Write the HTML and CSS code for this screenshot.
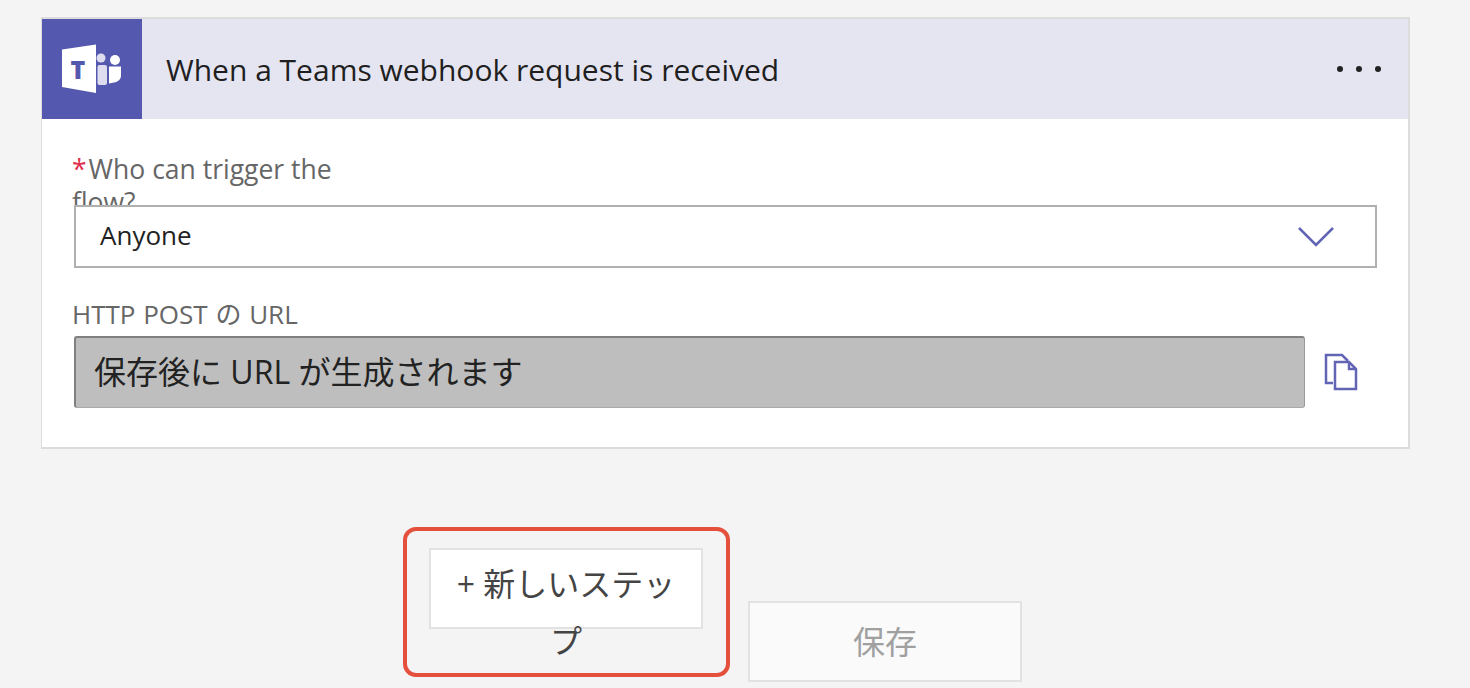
FILE: index.html
```html
<!DOCTYPE html>
<html lang="ja">
<head>
  <meta charset="UTF-8">
  <meta name="viewport" content="width=device-width, initial-scale=1.0">
  <title>When a Teams webhook request is received</title>
  <link rel="stylesheet" href="styles.css">
</head>
<body>
  <div class="card">
    <div class="card-header">
      <div class="logo-box">
        <svg width="100" height="100" viewBox="0 0 100 100">
          <circle cx="59" cy="39" r="4.500" fill="#fff" opacity="0.8"/>
          <rect x="55.500" y="46" width="9.500" height="20" rx="2" fill="#fff" opacity="0.8"/>
          <circle cx="73" cy="41" r="5" fill="#fff"/>
          <path d="M67 47.500h12v9c0 4-3 6.500-7 7l-5 1z" fill="#fff"/>
          <path d="M20 30.500L54 25.500V74L20 68z" fill="#fff"/>
          <text x="36" y="60" class="logo-letter">T</text>
        </svg>
      </div>
      <div class="card-title">When a Teams webhook request is received</div>
      <svg class="more" width="50" height="8" viewBox="0 0 50 8">
        <circle cx="4" cy="4" r="3" fill="#222"/>
        <circle cx="23" cy="4" r="3" fill="#222"/>
        <circle cx="42" cy="4" r="3" fill="#222"/>
      </svg>
    </div>
    <div class="card-body">
      <div class="field-label clipped"><span class="req">*</span>Who can trigger the flow?</div>
      <div class="select-box">
        <span>Anyone</span>
        <svg width="38" height="22" viewBox="0 0 38 22">
          <path d="M2 2L19 19L36 2" fill="none" stroke="#6264b4" stroke-width="2.500"/>
        </svg>
      </div>
      <div class="field-label url-label">HTTP POST の URL</div>
      <div class="url-row">
        <div class="url-field">保存後に URL が生成されます</div>
        <svg class="copy" width="34" height="38" viewBox="0 0 34 38">
          <path d="M9 30H2V2H18L24 8" fill="none" stroke="#6264b4" stroke-width="2.500"/>
          <path d="M11 9H25L32 16V36H11z" fill="#fff" stroke="#6264b4" stroke-width="2.500"/>
          <path d="M25 9V16H32" fill="none" stroke="#6264b4" stroke-width="2.500"/>
        </svg>
      </div>
    </div>
  </div>

  <div class="actions">
    <div class="highlight">
      <button class="btn new-step">+ 新しいステップ</button>
    </div>
    <button class="btn save" disabled>保存</button>
  </div>
</body>
</html>
```

FILE: styles.css
```css
* {
  box-sizing: border-box;
}

body {
  margin: 0;
  padding: 17px 60px 0 41px;
  height: 688px;
  overflow: hidden;
  background-color: #f4f4f4;
  font-family: "Open Sans", "Noto Sans CJK JP", sans-serif;
  color: #222;
}

.card {
  width: 1369px;
  height: 432px;
  background-color: #fff;
  border: 2px solid #dcdcdc;
  border-left-width: 1px;
}

.card-header {
  display: flex;
  align-items: center;
  height: 100px;
  background-color: #e5e5f1;
}

.logo-box {
  width: 100px;
  height: 100px;
  background-color: #5558af;
}

.logo-box svg {
  display: block;
}

.logo-letter {
  font-family: "Open Sans", sans-serif;
  font-size: 25px;
  font-weight: 800;
  fill: #5558af;
  text-anchor: middle;
}

.card-title {
  flex: 1;
  padding-left: 24px;
  font-size: 30px;
  color: #1f1f1f;
}

.more {
  margin-right: 22px;
}

.card-body {
  padding: 34px 0 0 30px;
}

.field-label {
  font-size: 26.500px;
  line-height: 33px;
  color: #666;
}

.clipped {
  width: 290px;
  height: 52px;
  overflow: hidden;
}

.req {
  margin-right: 2px;
  color: #e0304e;
}

.select-box {
  display: flex;
  align-items: center;
  justify-content: space-between;
  width: 1303px;
  height: 63px;
  margin-left: 2px;
  padding: 0 40px 4px 24px;
  border: 2px solid #b0b0b0;
  font-size: 26px;
}

.select-box svg {
  margin-top: 4px;
}

.url-label {
  height: 38px;
  margin-top: 30px;
  font-size: 26px;
  word-spacing: 1px;
}

.url-row {
  display: flex;
  align-items: center;
  margin-left: 2px;
}

.url-field {
  display: flex;
  align-items: center;
  width: 1231px;
  height: 72px;
  padding: 0 0 5px 18px;
  background-color: #bebebe;
  border-top: 2px solid #808080;
  border-left: 2px solid #808080;
  border-right: 1px solid #999;
  border-bottom: 1px solid #aaa;
  border-radius: 3px;
  font-size: 32px;
}

.copy {
  margin-left: 19px;
}

.actions {
  display: flex;
  align-items: flex-start;
  gap: 18px;
  margin: 78px 0 0 362px;
}

.highlight {
  width: 327px;
  height: 150px;
  padding: 17px 0 0 22px;
  border: 4px solid #e4503c;
  border-radius: 13px;
}

.btn {
  display: block;
  width: 274px;
  height: 81px;
  padding: 0 20px;
  border: 2px solid #e2e2e2;
  font-family: inherit;
  font-size: 32px;
  line-height: 57px;
  text-align: center;
}

.new-step {
  padding-top: 5px;
  background-color: #fff;
  color: #444;
}

.save {
  margin-top: 74px;
  background-color: #fafafa;
  color: #a0a0a0;
}
```
